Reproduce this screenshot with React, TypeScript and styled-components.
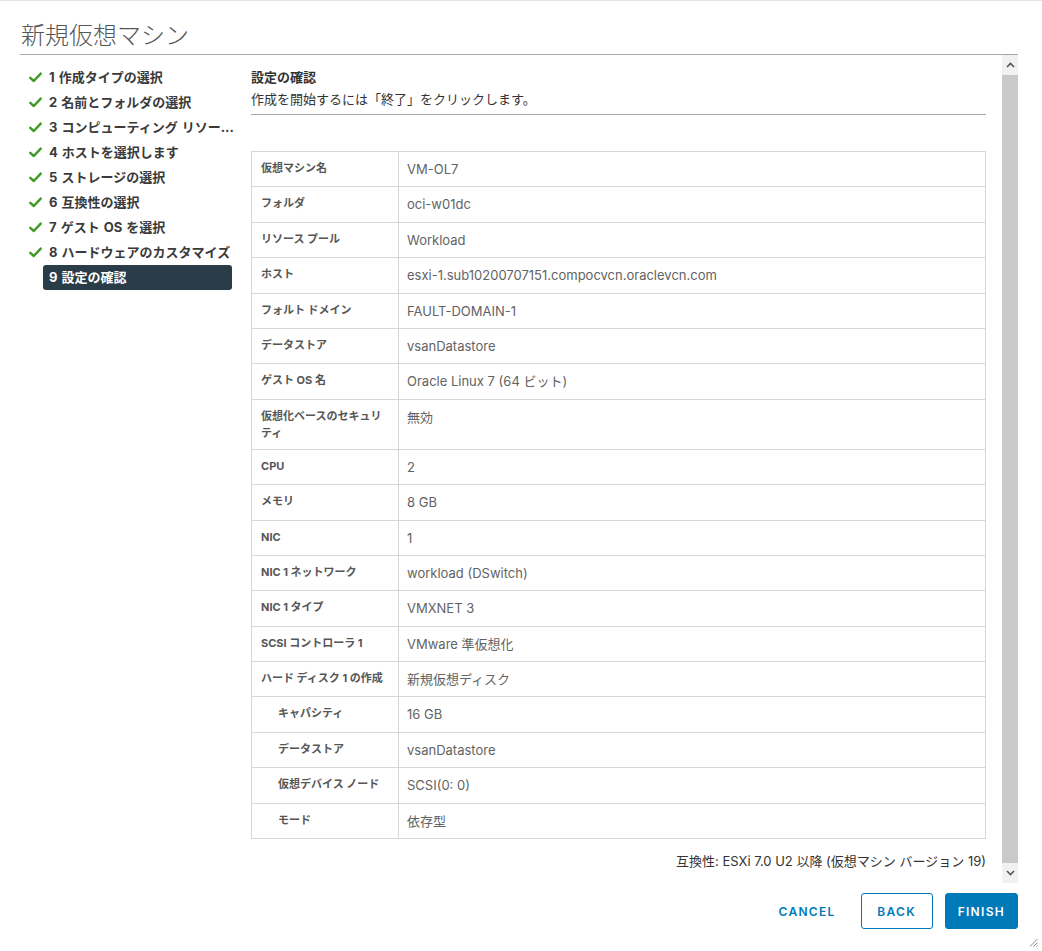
import React from 'react';
import styled, {createGlobalStyle} from 'styled-components';

const GlobalStyle = createGlobalStyle`
    html, body {
        margin: 0;
        padding: 0;
        background: #fff;
    }
    body {
        font-family: Inter, "Noto Sans CJK JP", sans-serif;
        color: #333;
    }
`;

type Step = { label: string; done: boolean };

const steps: Step[] = [
    {label: '1 作成タイプの選択', done: true},
    {label: '2 名前とフォルダの選択', done: true},
    {label: '3 コンピューティング リソー...', done: true},
    {label: '4 ホストを選択します', done: true},
    {label: '5 ストレージの選択', done: true},
    {label: '6 互換性の選択', done: true},
    {label: '7 ゲスト OS を選択', done: true},
    {label: '8 ハードウェアのカスタマイズ', done: true},
    {label: '9 設定の確認', done: false},
];

type Row = { name: string; value: string; indent?: boolean };

const rows: Row[] = [
    {name: '仮想マシン名', value: 'VM-OL7'},
    {name: 'フォルダ', value: 'oci-w01dc'},
    {name: 'リソース プール', value: 'Workload'},
    {name: 'ホスト', value: 'esxi-1.sub10200707151.compocvcn.oraclevcn.com'},
    {name: 'フォルト ドメイン', value: 'FAULT-DOMAIN-1'},
    {name: 'データストア', value: 'vsanDatastore'},
    {name: 'ゲスト OS 名', value: 'Oracle Linux 7 (64 ビット)'},
    {name: '仮想化ベースのセキュリティ', value: '無効'},
    {name: 'CPU', value: '2'},
    {name: 'メモリ', value: '8 GB'},
    {name: 'NIC', value: '1'},
    {name: 'NIC 1 ネットワーク', value: 'workload (DSwitch)'},
    {name: 'NIC 1 タイプ', value: 'VMXNET 3'},
    {name: 'SCSI コントローラ 1', value: 'VMware 準仮想化'},
    {name: 'ハード ディスク 1 の作成', value: '新規仮想ディスク'},
    {name: 'キャパシティ', value: '16 GB', indent: true},
    {name: 'データストア', value: 'vsanDatastore', indent: true},
    {name: '仮想デバイス ノード', value: 'SCSI(0: 0)', indent: true},
    {name: 'モード', value: '依存型', indent: true},
];

const CheckIcon = () => (
    <svg width="13" height="11" viewBox="0 0 13 11">
        <path d="M1.3 5.8 L4.8 9 L11.7 1.6" fill="none" stroke="#3f9a25" strokeWidth="2.4"
              strokeLinecap="round" strokeLinejoin="round"/>
    </svg>
);

const Chevron = ({up}: { up?: boolean }) => (
    <svg width="9" height="6" viewBox="0 0 9 6">
        <path d={up ? 'M1 5 L4.5 1.5 L8 5' : 'M1 1 L4.5 4.5 L8 1'} fill="none" stroke="#555"
              strokeWidth="1.6"/>
    </svg>
);

export default function App() {
    return (
        <>
            <GlobalStyle/>
            <Dialog>
                <Header>新規仮想マシン</Header>
                <Body>
                    <Sidebar>
                        {steps.map((s) => (
                            <StepItem key={s.label}>
                                <StepIcon>{s.done && <CheckIcon/>}</StepIcon>
                                <StepLabel $active={!s.done}>{s.label}</StepLabel>
                            </StepItem>
                        ))}
                    </Sidebar>
                    <Content>
                        <PageTitle>設定の確認</PageTitle>
                        <PageDesc>作成を開始するには「終了」をクリックします。</PageDesc>
                        <SummaryTable>
                            <tbody>
                            {rows.map((r, i) => (
                                <SummaryRow key={i}>
                                    <NameCell $indent={r.indent}>{r.name}</NameCell>
                                    <ValueCell>{r.value}</ValueCell>
                                </SummaryRow>
                            ))}
                            </tbody>
                        </SummaryTable>
                        <Compat>互換性: ESXi 7.0 U2 以降 (仮想マシン バージョン 19)</Compat>
                    </Content>
                    <Scrollbar>
                        <ScrollButton><Chevron up/></ScrollButton>
                        <ScrollThumb/>
                        <ScrollButton><Chevron/></ScrollButton>
                    </Scrollbar>
                </Body>
                <Footer>
                    <FlatButton>CANCEL</FlatButton>
                    <OutlineButton>BACK</OutlineButton>
                    <PrimaryButton>FINISH</PrimaryButton>
                </Footer>
                <ResizeGrip width="9" height="9" viewBox="0 0 9 9">
                    <path d="M8.5 1 L1 8.5 M8.5 4.5 L4.5 8.5 M8.5 7.5 L7.5 8.5" stroke="#888" strokeWidth="1"/>
                </ResizeGrip>
            </Dialog>
        </>
    );
}

const Dialog = styled.div`
    position: relative;
    width: 1042px;
    height: 951px;
    box-sizing: border-box;
    border-top: 1px solid #e4e4e4;
    padding: 0 24px 0 20px;
    display: flex;
    flex-direction: column;
`;

const Header = styled.h1`
    margin: 0;
    padding: 19px 0 2px 1px;
    font-size: 24px;
    line-height: 32px;
    font-weight: 300;
    color: #565656;
    border-bottom: 1px solid #a8a8a8;
`;

const Body = styled.div`
    display: flex;
    height: 828px;
`;

const Sidebar = styled.ul`
    list-style: none;
    margin: 0;
    padding: 10px 0 0 9px;
    width: 222px;
    flex-shrink: 0;
`;

const StepItem = styled.li`
    display: flex;
    align-items: center;
    height: 25px;
`;

const StepIcon = styled.span`
    width: 14px;
    display: flex;
    align-items: center;
`;

const StepLabel = styled.span<{ $active?: boolean }>`
    width: 189px;
    height: 25px;
    box-sizing: border-box;
    padding: 0 6px;
    line-height: 25px;
    font-size: 13px;
    font-weight: 700;
    white-space: nowrap;
    border-radius: 3px;
    word-spacing: 1px;
    color: ${({$active}) => ($active ? '#fff' : '#3a3a3a')};
    background: ${({$active}) => ($active ? '#2b3c49' : 'transparent')};
`;

const Content = styled.div`
    width: 735px;
    padding-top: 12px;
    flex-shrink: 0;
    margin-right: 16px;
    display: flex;
    flex-direction: column;
`;

const PageTitle = styled.h2`
    margin: 0;
    font-size: 13px;
    line-height: 20px;
    font-weight: 700;
    color: #333;
`;

const PageDesc = styled.p`
    margin: 1px 0 0;
    padding-bottom: 4px;
    font-size: 13px;
    line-height: 22px;
    color: #333;
    border-bottom: 1px solid #a8a8a8;
`;

const SummaryTable = styled.table`
    margin-top: 36px;
    width: 735px;
    border-collapse: collapse;
    border: 1px solid #d7d7d7;
    table-layout: fixed;
`;

const SummaryRow = styled.tr`
    height: 35.4px;
`;

const NameCell = styled.td<{ $indent?: boolean }>`
    width: 147px;
    box-sizing: border-box;
    vertical-align: top;
    padding: 8px 9px 7px ${({$indent}) => ($indent ? '26px' : '9px')};
    font-size: 11px;
    line-height: 17px;
    font-weight: 700;
    color: #565656;
    border: 1px solid #d7d7d7;
`;

const ValueCell = styled.td`
    vertical-align: top;
    padding: 7px 8px 7px 8px;
    font-size: 13px;
    line-height: 20px;
    color: #636363;
    border: 1px solid #d7d7d7;
`;

const Compat = styled.div`
    margin-top: 12px;
    text-align: right;
    font-size: 13px;
    line-height: 20px;
    color: #333;
`;

const Scrollbar = styled.div`
    width: 16px;
    display: flex;
    flex-direction: column;
    background: #f1f1f1;
`;

const ScrollButton = styled.div`
    height: 20px;
    display: flex;
    align-items: center;
    justify-content: center;
    background: #f1f1f1;
`;

const ScrollThumb = styled.div`
    flex: 1;
    background: #c9c9c9;
`;

const Footer = styled.div`
    display: flex;
    justify-content: flex-end;
    align-items: center;
    gap: 12px;
    padding-top: 10px;
`;

const BaseButton = styled.button`
    height: 36px;
    box-sizing: border-box;
    padding: 0 12px;
    font-family: Inter, sans-serif;
    font-size: 12px;
    font-weight: 600;
    letter-spacing: 1.3px;
    border-radius: 3px;
    cursor: pointer;
`;

const FlatButton = styled(BaseButton)`
    min-width: 72px;
    border: 1px solid transparent;
    background: transparent;
    color: #0079b8;
`;

const OutlineButton = styled(BaseButton)`
    min-width: 72px;
    border: 1px solid #0079b8;
    background: #fff;
    color: #0079b8;
`;

const PrimaryButton = styled(BaseButton)`
    min-width: 72px;
    border: 1px solid #0079b8;
    background: #0079b8;
    color: #fff;
`;

const ResizeGrip = styled.svg`
    position: absolute;
    right: 4px;
    bottom: 4px;
`;
